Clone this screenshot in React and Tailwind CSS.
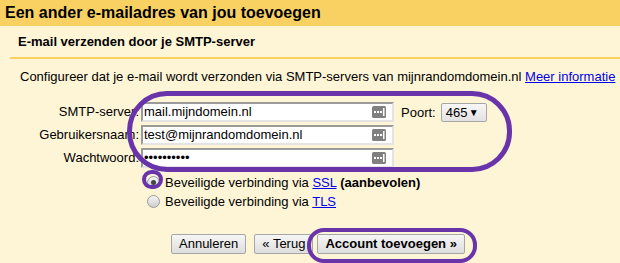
const DotsIcon = () => (
  <svg width="14" height="12" viewBox="0 0 14 12" className="shrink-0">
    <rect x="0" y="0" width="14" height="12" rx="1.5" fill="#808080" />
    <rect x="2" y="5" width="2" height="2" fill="#fff" />
    <rect x="5" y="5" width="2" height="2" fill="#fff" />
    <rect x="8" y="5" width="2" height="2" fill="#fff" />
    <rect x="11" y="2" width="1.5" height="8" fill="#fff" />
  </svg>
);

const Field = ({ label, children }) => (
  <div className="flex items-center h-[20px]">
    <div className="w-[123px] text-right pr-[2px] leading-[20px]">{label}</div>
    <div className="w-[253px] h-[20px] bg-white border-2 border-t-[#9a9a9a] border-l-[#9a9a9a] border-b-[#e4e4e4] border-r-[#e4e4e4] flex items-center justify-between pl-[1px] pr-[6px]">
      <span className="leading-[16px] whitespace-nowrap">{children}</span>
      <DotsIcon />
    </div>
  </div>
);

const Radio = ({ checked }) => (
  <span className="w-[13px] h-[13px] rounded-full border border-[#9a9a9a] bg-gradient-to-b from-[#f4f4f4] to-[#cfcfcf] flex items-center justify-center shrink-0">
    {checked && <span className="w-[5px] h-[5px] rounded-full bg-[#444]" />}
  </span>
);

const Button = ({ children, bold, className = '' }) => (
  <button className={`h-[20px] px-[7px] border border-[#a6a6a6] rounded-[2px] bg-gradient-to-b from-[#f6f6f6] to-[#dedede] text-[13px] leading-[18px] text-black ${bold ? 'font-bold' : ''} ${className}`}>
    {children}
  </button>
);

export default function App() {
  return (
    <div className="relative w-[620px] h-[263px] overflow-hidden bg-[#fef5d7] text-black text-[13px] font-['Liberation_Sans',Arial,sans-serif]">
      <div className="h-[26px] bg-[#f9d163] px-[5px] flex items-center">
        <h1 className="text-[16px] font-bold leading-[20px]">Een ander e-mailadres van jou toevoegen</h1>
      </div>

      <div className="h-[31px] px-[18px] flex items-center font-bold">E-mail verzenden door je SMTP-server</div>
      <div className="ml-[10px] h-[2px] bg-[#f9d163]" />

      <p className="mt-[10px] pl-[20px] leading-[15px] whitespace-nowrap">
        Configureer dat je e-mail wordt verzonden via SMTP-servers van mijnrandomdomein.nl{' '}
        <a href="#" className="text-[#0000ee] underline">Meer informatie</a>
      </p>

      <div className="mt-[18px] pl-[18px] flex gap-[7px]">
        <div className="flex flex-col gap-[3px]">
          <Field label="SMTP-server:">mail.mijndomein.nl</Field>
          <Field label="Gebruikersnaam:">test@mijnrandomdomein.nl</Field>
          <Field label="Wachtwoord:">••••••••••</Field>
        </div>
        <div className="flex items-start gap-[5px] h-[20px] pt-[1px]">
          <span className="leading-[19px]">Poort:</span>
          <div className="w-[46px] h-[19px] border border-[#a6a6a6] rounded-[2px] bg-gradient-to-b from-[#f7f7f7] to-[#e2e2e2] flex items-center justify-between pl-[4px] pr-[7px]">
            <span className="leading-[17px]">465</span>
            <span className="text-[10px] leading-[17px]">▼</span>
          </div>
        </div>
      </div>

      <div className="mt-[7px] pl-[147px] flex flex-col gap-[4px]">
        <label className="flex items-center gap-[5px] h-[15px]">
          <Radio checked />
          <span>
            Beveiligde verbinding via <a href="#" className="text-[#0000ee] underline">SSL</a>{' '}
            <b>(aanbevolen)</b>
          </span>
        </label>
        <label className="flex items-center gap-[5px] h-[15px]">
          <Radio />
          <span>
            Beveiligde verbinding via <a href="#" className="text-[#0000ee] underline">TLS</a>
          </span>
        </label>
      </div>

      <div className="mt-[25px] pl-[171px] flex">
        <Button>Annuleren</Button>
        <Button className="ml-[8px]">« Terug</Button>
        <Button bold className="ml-[4px]">Account toevoegen »</Button>
      </div>

      {/* purple annotations */}
      <div className="absolute left-[127px] top-[91px] w-[385px] h-[81px] rounded-[40px] border-[5px] border-[#6933aa] pointer-events-none" />
      <div className="absolute left-[142px] top-[170px] w-[21px] h-[19px] rounded-full border-[4px] border-[#6933aa] pointer-events-none" />
      <div className="absolute left-[307px] top-[228px] w-[170px] h-[35px] rounded-[17px] border-[4px] border-[#6933aa] pointer-events-none" />
    </div>
  );
}
